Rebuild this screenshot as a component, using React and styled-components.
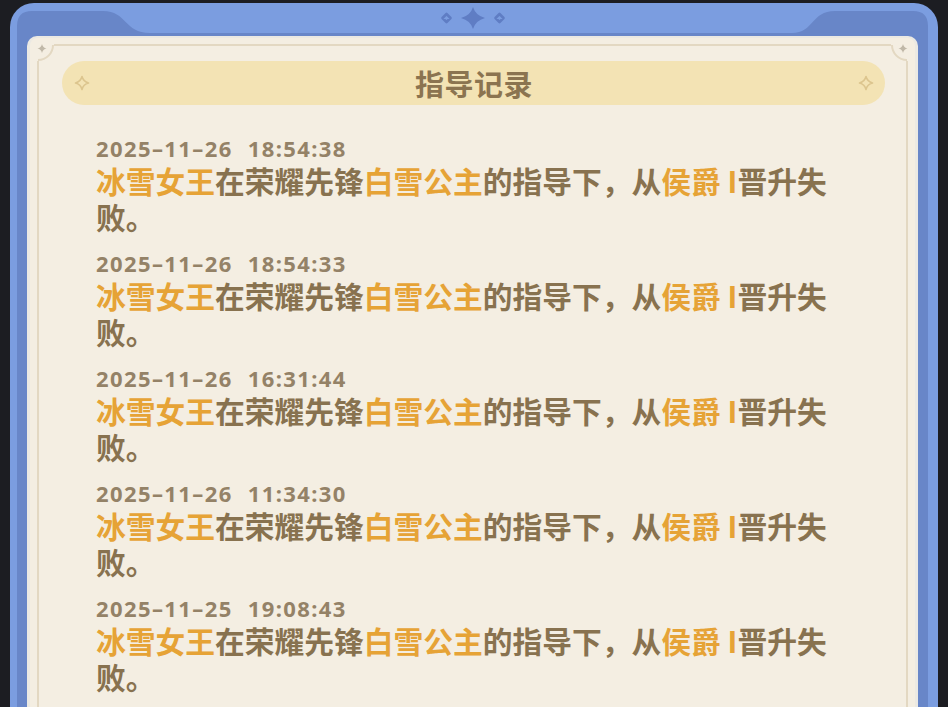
import React from "react";
import styled, { createGlobalStyle } from "styled-components";

const GlobalStyle = createGlobalStyle`
  html, body {
    margin: 0;
    padding: 0;
    background: #1c1d22;
    height: 100%;
    overflow: hidden;
  }
  #root {
    height: 100%;
  }
`;

const Screen = styled.div`
  height: 100vh;
  display: flex;
  flex-direction: column;
  padding-top: 3px;
  box-sizing: border-box;
`;

const Frame = styled.div`
  position: relative;
  flex: 1;
  margin: 0 10px;
  padding: 0 10px 0 7px;
  background: #7b9de0;
  border-radius: 24px 24px 0 0;
  display: flex;
  flex-direction: column;
`;

const TopBar = styled.div`
  height: 30px;
  display: flex;
  align-items: center;
  justify-content: center;
  position: relative;
  z-index: 1;
`;

const Shoulder = styled.svg`
  position: absolute;
  top: 0;
  ${(p) => (p.$side === "right" ? "right: 0;" : "left: 0;")}
  width: 160px;
  height: 31px;
`;

const Band = styled.div`
  flex: 1;
  display: flex;
  padding: 3px 10px 0;
  background: #6886c8;
  position: relative;
  z-index: 1;
`;

const Panel = styled.div`
  flex: 1;
  display: flex;
  padding: 6px 7px 0;
  background: #f4eee2;
  border: solid #ebe9e3;
  border-width: 2px 3px 0 3px;
  border-radius: 10px 10px 0 0;
  overflow: hidden;
`;

const InnerFrame = styled.div`
  position: relative;
  flex: 1;
  display: flex;
  flex-direction: column;
  border: 2px solid #e3d8c2;
  border-bottom: none;
  border-radius: 3px 3px 0 0;
`;

const CornerMark = styled.svg`
  position: absolute;
  top: -1px;
  ${(p) => (p.$side === "right" ? "right: -1px; transform: scaleX(-1);" : "left: -1px;")}
  width: 20px;
  height: 20px;
  overflow: visible;
`;

const TitleBar = styled.div`
  margin: 15px 21px 0 23px;
  height: 44px;
  border-radius: 22px;
  background: #f3e3b4;
  display: flex;
  align-items: center;
  justify-content: space-between;
  padding: 0 11px 0 12px;
`;

const Title = styled.h1`
  margin: 0;
  font-family: "Noto Sans CJK SC", "Noto Sans", sans-serif;
  font-weight: 700;
  font-size: 29px;
  line-height: 44px;
  color: #8b7450;
  letter-spacing: 0.5px;
`;

const RecordList = styled.ul`
  list-style: none;
  margin: 29px 0 0;
  padding: 0 60px 0 57px;
  display: flex;
  flex-direction: column;
  gap: 15px;
`;

const Record = styled.li`
  display: flex;
  flex-direction: column;
`;

const Stamp = styled.div`
  display: flex;
  gap: 15px;
  font-family: "Noto Sans", "DejaVu Sans", sans-serif;
  font-weight: 700;
  font-size: 22px;
  letter-spacing: 1.4px;
  line-height: 28px;
  color: #948267;
`;

const Message = styled.p`
  margin: 0;
  font-family: "Noto Sans CJK SC", "Noto Sans", sans-serif;
  font-weight: 700;
  font-size: 29.75px;
  line-height: 36px;
  color: #88724f;
`;

const Name = styled.span`
  color: #e6a336;
`;

function Sparkle({ cx, cy, r, k, ...rest }) {
  const d = `M${cx} ${cy - r} Q${cx + k} ${cy - k} ${cx + r} ${cy} Q${cx + k} ${cy + k} ${cx} ${cy + r} Q${cx - k} ${cy + k} ${cx - r} ${cy} Q${cx - k} ${cy - k} ${cx} ${cy - r} Z`;
  return <path d={d} {...rest} />;
}

function TopOrnament() {
  return (
    <svg width="70" height="26" viewBox="0 0 70 26">
      <path d="M35 2 Q37.5 10.5 47 13 Q37.5 15.5 35 24 Q32.5 15.5 23 13 Q32.5 10.5 35 2 Z" fill="#5f7dc4" />
      <path d="M8.5 9 L12.5 13 L8.5 17 L4.5 13 Z" fill="none" stroke="#5f7dc4" strokeWidth="2.6" strokeLinejoin="round" />
      <path d="M61.5 9 L65.5 13 L61.5 17 L57.5 13 Z" fill="none" stroke="#5f7dc4" strokeWidth="2.6" strokeLinejoin="round" />
    </svg>
  );
}

function ShoulderShape({ side }) {
  return (
    <Shoulder $side={side} viewBox="0 0 160 31" preserveAspectRatio="none">
      {side === "right" ? (
        <path d="M150 31 V23 Q150 8 135 8 H57 C33 8 36 30 14 30 V31 Z" fill="#6886c8" />
      ) : (
        <path d="M7 31 V23 Q7 8 22 8 H93 C117 8 114 30 140 30 V31 Z" fill="#6886c8" />
      )}
    </Shoulder>
  );
}

function Corner({ side }) {
  return (
    <CornerMark $side={side} viewBox="0 0 20 20">
      <path d="M-4 -4 H16 V0 A15 15 0 0 1 0 15 V16 H-4 Z" fill="#f4eee2" />
      <path d="M15 0 A15 15 0 0 1 0 15" fill="none" stroke="#e3d8c2" strokeWidth="2" />
      <Sparkle cx={4} cy={3.5} r={4.5} k={0.9} fill="#c0b8a8" />
    </CornerMark>
  );
}

function TitleStar() {
  return (
    <svg width="16" height="16" viewBox="0 0 16 16">
      <Sparkle cx={8} cy={8} r={6.5} k={1.3} fill="none" stroke="#dcc58e" strokeWidth="1.6" strokeLinejoin="round" />
    </svg>
  );
}

const records = [
  { day: "2025–11–26", time: "18:54:38" },
  { day: "2025–11–26", time: "18:54:33" },
  { day: "2025–11–26", time: "16:31:44" },
  { day: "2025–11–26", time: "11:34:30" },
  { day: "2025–11–25", time: "19:08:43" },
];

export default function App() {
  return (
    <Screen>
      <GlobalStyle />
      <Frame>
        <ShoulderShape side="left" />
        <ShoulderShape side="right" />
        <TopBar>
          <TopOrnament />
        </TopBar>
        <Band>
          <Panel>
            <InnerFrame>
              <Corner side="left" />
              <Corner side="right" />
              <TitleBar>
                <TitleStar />
                <Title>指导记录</Title>
                <TitleStar />
              </TitleBar>
              <RecordList>
                {records.map((r, i) => (
                  <Record key={i}>
                    <Stamp>
                      <span>{r.day}</span>
                      <span>{r.time}</span>
                    </Stamp>
                    <Message>
                      <Name>冰雪女王</Name>在荣耀先锋<Name>白雪公主</Name>的指导下，从<Name>侯爵 I</Name>晋升失败。
                    </Message>
                  </Record>
                ))}
              </RecordList>
            </InnerFrame>
          </Panel>
        </Band>
      </Frame>
    </Screen>
  );
}
